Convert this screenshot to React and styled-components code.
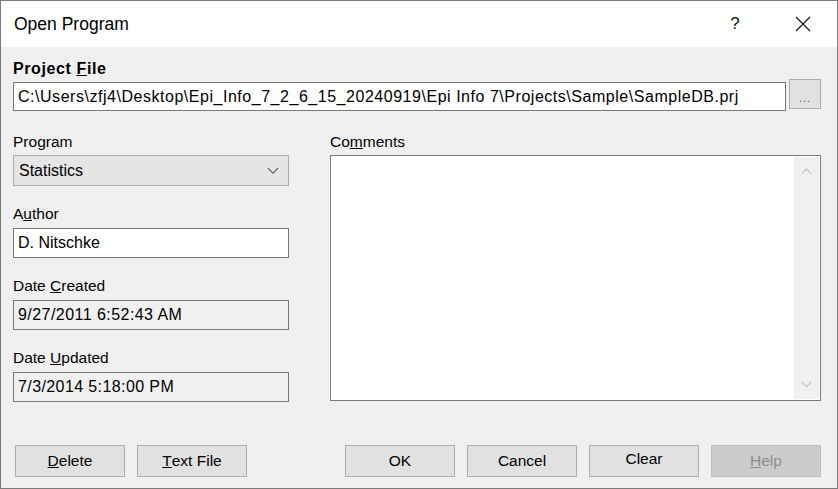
import React from 'react';
import styled, { createGlobalStyle } from 'styled-components';

const GlobalStyle = createGlobalStyle`
  html, body {
    margin: 0;
    padding: 0;
    background: #f0f0f0;
  }
  body {
    font-family: "Liberation Sans", Arial, sans-serif;
    color: #000;
  }
`;

const Window = styled.div`
  width: 838px;
  height: 489px;
  box-sizing: border-box;
  border: 1px solid #7a7a7a;
  background: #f0f0f0;
  display: flex;
  flex-direction: column;
`;

const TitleBar = styled.div`
  height: 46px;
  background: #fff;
  display: flex;
  align-items: center;
  padding-left: 13px;
  font-size: 17.5px;
`;

const TitleText = styled.div`
  flex: 1;
`;

const TitleButton = styled.div`
  width: 68px;
  height: 46px;
  display: flex;
  align-items: center;
  justify-content: center;
  font-size: 17px;
  color: #111;
`;

const Body = styled.div`
  flex: 1;
  padding: 13px 16px 0 12px;
  display: flex;
  flex-direction: column;
`;

const Label = styled.div`
  font-size: ${({ bold }) => (bold ? 16 : 15.5)}px;
  letter-spacing: ${({ bold }) => (bold ? 0.6 : 0)}px;
  line-height: 18px;
  height: 18px;
  font-weight: ${({ bold }) => (bold ? 700 : 400)};
  margin-bottom: ${({ gap }) => gap ?? 5}px;
`;

const PathRow = styled.div`
  display: flex;
  align-items: flex-start;
  gap: 3px;
`;

const TextBox = styled.div`
  box-sizing: border-box;
  height: ${({ h }) => h ?? 30}px;
  flex: ${({ grow }) => (grow ? 1 : 'none')};
  border: 1px solid #7a7a7a;
  background: ${({ readOnly }) => (readOnly ? '#f0f0f0' : '#fff')};
  font-size: 16px;
  letter-spacing: ${({ spacing }) => spacing ?? 0}px;
  padding: 0 4px;
  display: flex;
  align-items: center;
  white-space: nowrap;
  overflow: hidden;
`;

const BrowseButton = styled.div`
  box-sizing: border-box;
  width: 32px;
  height: 30px;
  margin-top: -3px;
  border: 1px solid #adadad;
  background: #e1e1e1;
  display: flex;
  align-items: center;
  justify-content: center;
  font-size: 11px;
  color: #555;
  letter-spacing: 1px;
  padding-top: 8px;
`;

const Main = styled.div`
  display: flex;
  gap: 41px;
  margin-top: 22px;
`;

const LeftColumn = styled.div`
  width: 276px;
  display: flex;
  flex-direction: column;
`;

const Field = styled.div`
  display: flex;
  flex-direction: column;
  margin-bottom: 19px;

  &:last-child {
    margin-bottom: 0;
  }
`;

const Select = styled.div`
  box-sizing: border-box;
  height: 31px;
  border: 1px solid #acacac;
  background: #e5e5e5;
  font-size: 16px;
  display: flex;
  align-items: center;
  justify-content: space-between;
  padding: 0 9px 0 5px;
  margin-top: -1px;
`;

const RightColumn = styled.div`
  flex: 1;
  display: flex;
  flex-direction: column;
`;

const TextArea = styled.div`
  box-sizing: border-box;
  height: 246px;
  margin-top: -1px;
  border: 1px solid #7a7a7a;
  background: #fff;
  display: flex;
  justify-content: flex-end;
  padding: 1px;
`;

const ScrollBar = styled.div`
  width: 25px;
  background: #f0f0f0;
  display: flex;
  flex-direction: column;
  justify-content: space-between;
  align-items: center;
  padding: 11px 0;
`;

const Footer = styled.div`
  display: flex;
  justify-content: space-between;
  margin-top: 43px;
  padding-left: 2px;
`;

const ButtonGroup = styled.div`
  display: flex;
  gap: ${({ gap }) => gap}px;
`;

const Button = styled.div`
  box-sizing: border-box;
  width: 110px;
  height: 32px;
  border: 1px solid ${({ disabled }) => (disabled ? '#bfbfbf' : '#adadad')};
  background: ${({ disabled }) => (disabled ? '#cccccc' : '#e1e1e1')};
  color: ${({ disabled }) => (disabled ? '#8d8d8d' : '#000')};
  font-size: 15.5px;
  display: flex;
  align-items: center;
  justify-content: center;
  padding-bottom: ${({ raised }) => (raised ? 4 : 0)}px;
`;

const Chevron = ({ up, color = '#606060', size = 12 }) => (
  <svg width={size} height={size * 0.6} viewBox="0 0 12 7">
    <polyline
      points={up ? '1,6 6,1 11,6' : '1,1 6,6 11,1'}
      fill="none"
      stroke={color}
      strokeWidth="1.3"
    />
  </svg>
);

const CloseIcon = () => (
  <svg width="16" height="16" viewBox="0 0 16 16">
    <path d="M1 1 L15 15 M15 1 L1 15" stroke="#111" strokeWidth="1.1" />
  </svg>
);

function App() {
  return (
    <>
      <GlobalStyle />
      <Window>
        <TitleBar>
          <TitleText>Open Program</TitleText>
          <TitleButton>?</TitleButton>
          <TitleButton>
            <CloseIcon />
          </TitleButton>
        </TitleBar>
        <Body>
          <Label bold gap={4}>
            Project <u>F</u>ile
          </Label>
          <PathRow>
            <TextBox grow h={29} spacing={0.53}>
              C:\Users\zfj4\Desktop\Epi_Info_7_2_6_15_20240919\Epi Info 7\Projects\Sample\SampleDB.prj
            </TextBox>
            <BrowseButton>...</BrowseButton>
          </PathRow>
          <Main>
            <LeftColumn>
              <Field>
                <Label>
                  Pro<u>g</u>ram
                </Label>
                <Select>
                  Statistics
                  <Chevron />
                </Select>
              </Field>
              <Field>
                <Label>
                  A<u>u</u>thor
                </Label>
                <TextBox>D. Nitschke</TextBox>
              </Field>
              <Field>
                <Label>
                  Date <u>C</u>reated
                </Label>
                <TextBox readOnly spacing={0.45}>9/27/2011 6:52:43 AM</TextBox>
              </Field>
              <Field>
                <Label>
                  Date <u>U</u>pdated
                </Label>
                <TextBox readOnly spacing={0.4}>7/3/2014 5:18:00 PM</TextBox>
              </Field>
            </LeftColumn>
            <RightColumn>
              <Label>
                Co<u>m</u>ments
              </Label>
              <TextArea>
                <ScrollBar>
                  <Chevron up color="#c2c2c2" size={11} />
                  <Chevron color="#c2c2c2" size={11} />
                </ScrollBar>
              </TextArea>
            </RightColumn>
          </Main>
          <Footer>
            <ButtonGroup gap={12}>
              <Button>
                <u>D</u>elete
              </Button>
              <Button>
                <u>T</u>ext File
              </Button>
            </ButtonGroup>
            <ButtonGroup gap={12}>
              <Button>OK</Button>
              <Button>Cancel</Button>
              <Button raised>Clear</Button>
              <Button disabled>
                <u>H</u>elp
              </Button>
            </ButtonGroup>
          </Footer>
        </Body>
      </Window>
    </>
  );
}

export default App;
